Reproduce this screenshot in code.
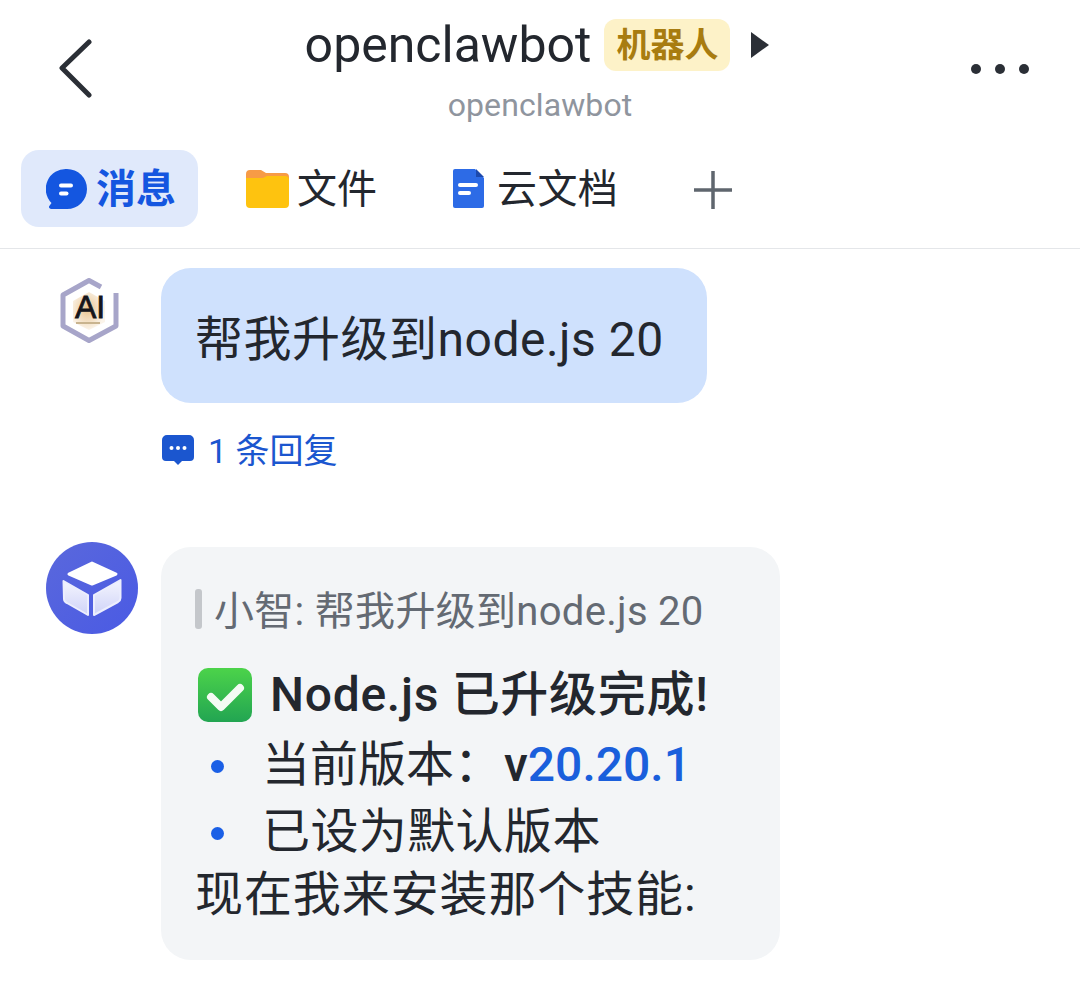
<script>
</script>

<div class="page">
  <header class="head">
    <button class="back" aria-label="back">
      <svg width="34" height="60" viewBox="0 0 34 60"><path d="M30 3 L3 29 L30 56" fill="none" stroke="#2b2f36" stroke-width="5" stroke-linecap="round" stroke-linejoin="round"/></svg>
    </button>
    <div class="titles">
      <div class="titlerow">
        <span class="name">openclawbot</span>
        <span class="tag">机器人</span>
        <svg class="tri" width="18" height="28" viewBox="0 0 18 28"><path d="M0 1 L18 14 L0 27 Z" fill="#2b2f36"/></svg>
      </div>
      <div class="sub">openclawbot</div>
    </div>
    <div class="dots"><i></i><i></i><i></i></div>
  </header>

  <nav class="tabs">
    <div class="tab active">
      <svg width="42" height="42" viewBox="0 0 42 42"><path d="M21 1a20 20 0 1 1 0 40H5a2 2 0 0 1-1.500-3.300l2-2.700A20 20 0 0 1 21 1z" fill="#1456e0"/><rect x="13" y="15.500" width="14" height="4" rx="2" fill="#fff"/><rect x="13" y="23.500" width="9.500" height="4" rx="2" fill="#fff"/></svg>
      <span>消息</span>
    </div>
    <div class="tab">
      <svg width="43" height="38" viewBox="0 0 43 38"><path d="M0 4a4 4 0 0 1 4-4h11l5 3h19a4 4 0 0 1 4 4v6H0z" fill="#f79b46"/><path d="M0 8h17l4-2h18a4 4 0 0 1 4 4v24a4 4 0 0 1-4 4H4a4 4 0 0 1-4-4z" fill="#fec30f"/></svg>
      <span>文件</span>
    </div>
    <div class="tab">
      <svg width="31" height="39" viewBox="0 0 31 39"><path d="M2 0h20l9 9v28a2 2 0 0 1-2 2H2a2 2 0 0 1-2-2V2a2 2 0 0 1 2-2z" fill="#2d6be6"/><path d="M23 0l8 8h-8z" fill="#1c49ad"/><rect x="5" y="14" width="20" height="4" rx="2" fill="#fff"/><rect x="5" y="22" width="13" height="4" rx="2" fill="#fff"/></svg>
      <span>云文档</span>
    </div>
    <svg class="plus" width="38" height="38" viewBox="0 0 38 38"><path d="M19 0V38M0 19H38" stroke="#5f666e" stroke-width="3.500"/></svg>
  </nav>

  <main class="chat">
    <section class="msg first">
      <div class="ava-slot">
        <svg class="ai" width="60" height="66" viewBox="0 0 60 66">
          <defs><radialGradient id="bg" cx="0.45" cy="0.45" r="0.55"><stop offset="0" stop-color="#e9c48f"/><stop offset="1" stop-color="#fbf4ea"/></radialGradient></defs>
          <path d="M41 9 L29 2.500 L3 17 V48 L29 62.500 L56 48 V15" fill="none" stroke="#a7a5c9" stroke-width="5" stroke-linejoin="round"/>
          <path d="M29 14 L45 23 V44 L29 52 L13 44 V23 Z" fill="url(#bg)"/>
          <text x="30" y="40" text-anchor="middle" class="aitext">AI</text>
          <rect x="16" y="44" width="24" height="2" fill="#c9b48f"/>
        </svg>
      </div>
      <div class="col">
        <div class="bubble blue">帮我升级到node.js 20</div>
        <div class="reply">
          <svg width="32" height="30" viewBox="0 0 32 30"><path d="M5 0h22a5 5 0 0 1 5 5v17a4 4 0 0 1-4 4h-8l-4 4-4-4H4a4 4 0 0 1-4-4V5a5 5 0 0 1 5-5z" fill="#1b56cf"/><circle cx="9.500" cy="13" r="2" fill="#fff"/><circle cx="16" cy="13" r="2" fill="#fff"/><circle cx="22.500" cy="13" r="2" fill="#fff"/></svg>
          <span>1 条回复</span>
        </div>
      </div>
    </section>

    <section class="msg second">
      <div class="ava-slot">
        <svg class="cube" width="92" height="92" viewBox="0 0 92 92">
          <defs>
            <linearGradient id="cg" x1="0" y1="0" x2="0" y2="1"><stop offset="0" stop-color="#f4f5fe"/><stop offset="1" stop-color="#cfd3f8"/></linearGradient>
            <linearGradient id="cb" x1="0" y1="0" x2="1" y2="1"><stop offset="0" stop-color="#5a68dc"/><stop offset="1" stop-color="#4a5ae4"/></linearGradient>
          </defs>
          <circle cx="46" cy="46" r="46" fill="url(#cb)"/>
          <path d="M46 21 L70 32 L46 42 L23 32 Z" fill="#fff" stroke="#fff" stroke-width="3" stroke-linejoin="round"/>
          <path d="M17.500 39 L42 53 V73 L21 61 Q18 59.500 18 57 Z" fill="url(#cg)" stroke="#eceefd" stroke-width="2" stroke-linejoin="round"/>
          <path d="M74.500 38 L48 53 V73 L72 60 Q74.500 58.500 74.500 56 Z" fill="url(#cg)" stroke="#eceefd" stroke-width="2" stroke-linejoin="round"/>
        </svg>
      </div>
      <div class="bubble grey">
        <div class="quote"><span>小智: 帮我升级到node.js 20</span></div>
        <div class="headline">
          <svg class="check" width="54" height="54" viewBox="0 0 54 54">
            <defs><linearGradient id="gg" x1="0" y1="0" x2="0" y2="1"><stop offset="0" stop-color="#4cd34a"/><stop offset="1" stop-color="#22a552"/></linearGradient></defs>
            <rect width="54" height="54" rx="10" fill="url(#gg)"/>
            <path d="M13 29 L23 39 L42 20" fill="none" stroke="#f3fbf3" stroke-width="8" stroke-linecap="round" stroke-linejoin="round"/>
          </svg>
          <b>Node.js 已升级完成!</b>
        </div>
        <ul>
          <li>当前版本：<b>v<span class="link">20.20.1</span></b></li>
          <li>已设为默认版本</li>
        </ul>
        <div class="last">现在我来安装那个技能:</div>
      </div>
    </section>
  </main>
</div>

<style>
  :global(body) { margin: 0; background: #fff; }
  .page {
    width: 1080px; height: 992px; overflow: hidden; background: #fff; color: #23272e;
    font-family: "Roboto", "Noto Sans CJK SC", sans-serif;
  }
  .head {
    display: grid; grid-template-columns: 150px 1fr 150px; height: 150px; box-sizing: border-box;
  }
  .back {
    all: unset; align-self: start; padding: 39px 0 0 59px;
  }
  .back svg { display: block; }
  .titles { display: flex; flex-direction: column; align-items: center; }
  .titlerow { display: flex; align-items: center; height: 54px; margin-top: 18px; margin-left: -6px; }
  .name { font-size: 50px; line-height: 54px; color: #23272e; }
  .tag {
    margin-left: 13px; background: #fdf2c8; color: #a87c10; font-size: 34px; font-weight: 700;
    line-height: 52px; height: 52px; padding: 0 12px; border-radius: 12px;
  }
  .tri { margin-left: 21px; }
  .sub { font-size: 32px; line-height: 40px; color: #8f959e; margin-top: 13px; letter-spacing: 0.1px; }
  .dots { display: flex; gap: 14px; padding: 64px 0 0 41px; }
  .dots i { width: 10px; height: 10px; border-radius: 50%; background: #2b2f36; }

  .tabs {
    display: flex; align-items: center; height: 99px; box-sizing: border-box; padding: 0 0 21px 21px;
    border-bottom: 1px solid #e4e6e9; font-size: 40px;
  }
  .tab { display: flex; align-items: center; gap: 8px; height: 77px; color: #23272e; }
  .tab span { padding-bottom: 5px; }
  .tab:nth-child(2) { margin-left: 48px; }
  .tab:nth-child(3) { margin-left: 75px; gap: 13px; }
  .tab:nth-child(3) span { letter-spacing: 0.4px; }
  .tab:nth-child(3) svg { margin-left: 1px; }
  .active {
    width: 177px; box-sizing: border-box; padding-left: 25px; background: #e0e9fb; border-radius: 18px;
    color: #1456e0; font-weight: 700;
  }
  .plus { margin-left: 76px; margin-top: 2px; }

  .chat { display: flex; flex-direction: column; }
  .msg { display: flex; }
  .ava-slot { width: 161px; flex: none; display: flex; align-items: flex-start; }
  .first { padding-top: 19px; }
  .ai { margin: 10px 0 0 60px; }
  .aitext { font: 400 32px "Liberation Sans", sans-serif; fill: #15151a; stroke: #15151a; stroke-width: 0.8; }
  .col { display: flex; flex-direction: column; align-items: flex-start; }
  .bubble { box-sizing: border-box; border-radius: 30px; }
  .blue {
    background: #cfe1fd; width: 546px; height: 135px; padding: 4px 34px 0; font-size: 48px; line-height: 135px;
    color: #23272e; letter-spacing: 0.5px;
  }
  .reply {
    display: flex; align-items: center; gap: 14px; margin-top: 27px; height: 36px; color: #1b56cf; font-size: 34px;
  }
  .reply svg { margin: 3px 0 0 1px; }
  .second { margin-top: 81px; }
  .second .ava-slot { margin-top: -5px; }
  .cube { margin-left: 46px; }
  .grey {
    width: 619px; height: 413px; background: #f3f5f7; padding: 42px 36px 0; font-size: 48px; color: #23272e;
  }
  .quote {
    font-size: 40px; line-height: 44px; color: #646a73; height: 40px; display: flex; align-items: center; gap: 12px;
    margin-left: -2px; letter-spacing: 0.3px;
  }
  .quote::before { content: ""; width: 7px; height: 40px; border-radius: 3px; background: #c4c7cb; flex: none; }
  .quote span { padding-top: 5px; }
  .headline { display: flex; align-items: center; gap: 18px; margin-top: 38px; height: 56px; margin-left: 1px; }
  .headline b { font-size: 48px; font-weight: 500; letter-spacing: 0.7px; padding-bottom: 10px; }
  ul { list-style: none; margin: 9px 0 0; padding: 0; }
  li { position: relative; padding-left: 65px; line-height: 66px; height: 67px; white-space: nowrap; }
  li:nth-child(2) { letter-spacing: 0.4px; }
  li::before {
    content: ""; position: absolute; left: 14px; top: 28px; width: 13px; height: 13px; border-radius: 50%; background: #1a5fe6;
  }
  li b { font-weight: 500; margin-left: 2px; }
  .link { color: #1a5fdc; }
  .last { line-height: 58px; margin-left: -2px; letter-spacing: 0.9px; }
</style>
